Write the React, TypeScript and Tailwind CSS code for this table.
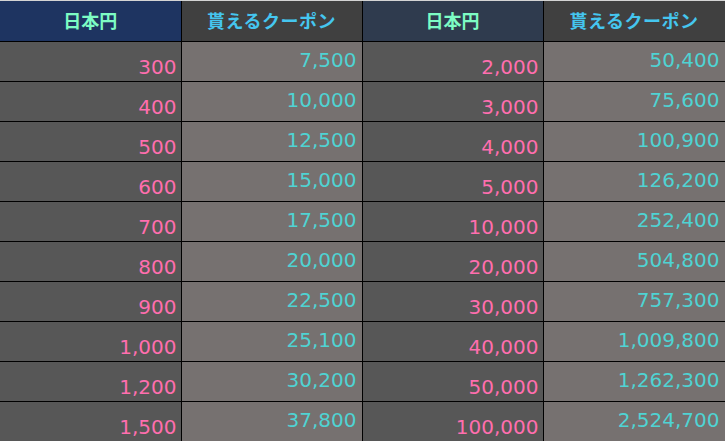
import React from 'react';

const rows: [string, string, string, string][] = [
  ['300', '7,500', '2,000', '50,400'],
  ['400', '10,000', '3,000', '75,600'],
  ['500', '12,500', '4,000', '100,900'],
  ['600', '15,000', '5,000', '126,200'],
  ['700', '17,500', '10,000', '252,400'],
  ['800', '20,000', '20,000', '504,800'],
  ['900', '22,500', '30,000', '757,300'],
  ['1,000', '25,100', '40,000', '1,009,800'],
  ['1,200', '30,200', '50,000', '1,262,300'],
  ['1,500', '37,800', '100,000', '2,524,700'],
];

const font = { fontFamily: '"Noto Sans CJK JP", "Noto Sans", sans-serif' };
const num = { fontFamily: '"DejaVu Sans", "Noto Sans", sans-serif' };

export default function App() {
  return (
    <div className="w-[725px] h-[441px] bg-white border-t border-[#d4d4d4]" style={font}>
      <table className="border-collapse table-fixed w-[725px]">
        <colgroup>
          <col className="w-[181px]" />
          <col className="w-[181px]" />
          <col className="w-[181px]" />
          <col className="w-[182px]" />
        </colgroup>
        <thead>
          <tr className="h-[40px]">
            <th className="bg-[#1e3461] text-[#7dfcc4] text-[18px] font-bold border-r border-b border-black text-center align-middle">日本円</th>
            <th className="bg-[#404040] text-[#45c6ef] text-[18px] font-bold border-r border-b border-black text-center align-middle tracking-[0.5px]">貰えるクーポン</th>
            <th className="bg-[#2f3b4e] text-[#7dfcc4] text-[18px] font-bold border-r border-b border-black text-center align-middle">日本円</th>
            <th className="bg-[#404040] text-[#45c6ef] text-[18px] font-bold border-r border-b border-black text-center align-middle tracking-[0.5px]">貰えるクーポン</th>
          </tr>
        </thead>
        <tbody style={num}>
          {rows.map((r, i) => (
            <tr key={i} className="h-[40px]">
              <td className="bg-[#575757] text-[#ff6eae] text-[20px] leading-none border-r border-b border-black text-right align-bottom pr-[4px] pb-[4px]">{r[0]}</td>
              <td className="bg-[#767170] text-[#4fd3d3] text-[20px] leading-none border-r border-b border-black text-right align-middle pr-[5px] pb-[2px]">{r[1]}</td>
              <td className="bg-[#575757] text-[#ff6eae] text-[20px] leading-none border-r border-b border-black text-right align-bottom pr-[4px] pb-[4px]">{r[2]}</td>
              <td className="bg-[#767170] text-[#4fd3d3] text-[20px] leading-none border-r border-b border-black text-right align-middle pr-[5px] pb-[2px]">{r[3]}</td>
            </tr>
          ))}
        </tbody>
      </table>
    </div>
  );
}
